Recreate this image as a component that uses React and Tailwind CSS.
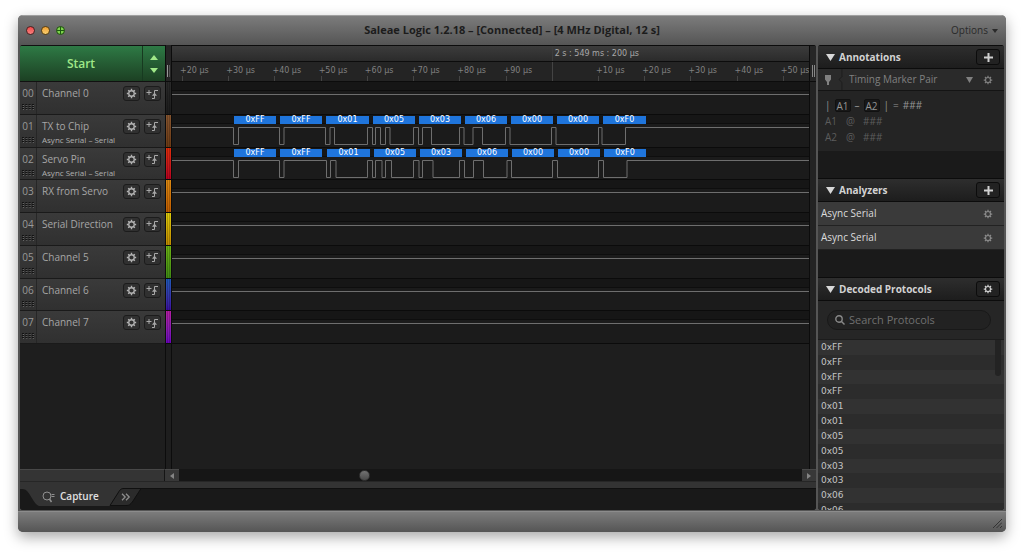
import { useState } from 'react';

const channels = [
  { name: 'Channel 0', strip: 'from-[#2a2a2a] to-[#1c1c1c]' },
  { name: 'TX to Chip', analyzer: 'Async Serial – Serial', strip: 'from-[#86552f] to-[#6b3a14]' },
  { name: 'Servo Pin', analyzer: 'Async Serial – Serial', strip: 'from-[#e02c08] to-[#b80020]' },
  { name: 'RX from Servo', strip: 'from-[#dd8a12] to-[#c05c00]' },
  { name: 'Serial Direction', strip: 'from-[#dccb0c] to-[#c08a00]' },
  { name: 'Channel 5', strip: 'from-[#6cb314] to-[#3f8a14]' },
  { name: 'Channel 6', strip: 'from-[#1c58b8] to-[#3a0ca0]' },
  { name: 'Channel 7', strip: 'from-[#b51ca4] to-[#6c00bc]' },
];

// x of every level change, measured from the left edge of the trace area
const signals = {
  1: {
    edges: [61.5, 66.5, 107.5, 112, 153.5, 158, 162.5, 195.5, 200.5, 203.5, 208.5, 213.5, 218, 241.5, 246.5, 250.5, 259.5, 287.5, 292, 301, 310.5, 333.5, 338, 379.5, 384, 426.5, 430, 453.5],
    bytes: [[62, 42, '0xFF'], [108, 42, '0xFF'], [154, 43, '0x01'], [201, 42, '0x05'], [247, 42, '0x03'], [293, 42, '0x06'], [339, 42, '0x00'], [385, 42, '0x00'], [431, 43, '0xF0']],
  },
  2: {
    edges: [61.5, 66.5, 107.5, 112, 154.5, 158.5, 164, 195.5, 200.5, 203.5, 210, 213.5, 219.5, 241.5, 247, 250.5, 261, 287.5, 292.5, 301.5, 311.5, 335, 339.5, 380.5, 385.5, 426.5, 431.5, 455],
    bytes: [[62, 42, '0xFF'], [108, 42, '0xFF'], [155, 43, '0x01'], [202, 42, '0x05'], [248, 42, '0x03'], [294, 42, '0x06'], [340, 42, '0x00'], [386, 42, '0x00'], [432, 42, '0xF0']],
  },
};

const ticks = ['+20 µs', '+30 µs', '+40 µs', '+50 µs', '+60 µs', '+70 µs', '+80 µs', '+90 µs', '', '+10 µs', '+20 µs', '+30 µs', '+40 µs', '+50 µs'];
const decoded = ['0xFF', '0xFF', '0xFF', '0xFF', '0x01', '0x01', '0x05', '0x05', '0x03', '0x03', '0x06', '0x06'];

const wave = edges => {
  let d = 'M0 12.5';
  edges.forEach((x, i) => { d += ` H${x} V${i % 2 ? 12.5 : 29.5}`; });
  return d + ' H4000';
};

function Gear({ className }) {
  return (
    <svg viewBox="0 0 12 12" className={className} fill="none" stroke="currentColor" aria-hidden="true">
      <circle cx="6" cy="6" r="3" strokeWidth="1.4" />
      <path strokeWidth="1.5" d="M6 .9v1.8M6 9.3v1.8M.9 6h1.8M9.3 6h1.8M2.4 2.4l1.2 1.2M8.4 8.4l1.2 1.2M9.6 2.4L8.4 3.6M3.6 8.4L2.4 9.6" />
    </svg>
  );
}

function Triangle({ className }) {
  return <svg viewBox="0 0 10 8" preserveAspectRatio="none" className={className} fill="currentColor" aria-hidden="true"><path d="M0 0h10L5 8z" /></svg>;
}

function Channel({ index, channel }) {
  return (
    <div className="flex border-b border-[#1a1a1a] bg-linear-to-b from-[#3a3a3a] to-[#303030] overflow-hidden">
      <div className="w-[17px] shrink-0 border-r border-[#262626] pt-1 flex flex-col items-center gap-1">
        <span className="text-[10px] leading-[14px] text-[#999]">{'0' + index}</span>
        <svg viewBox="0 0 12 6" className="w-3 h-[6px]" fill="none" stroke="#131313" aria-hidden="true">
          <path strokeDasharray="2 1.3" d="M0 .5h12M0 2.5h12M0 4.5h12" />
          <path stroke="#666" strokeDasharray="1 2.3" d="M1 1.5h11M1 3.5h11M1 5.500h11" />
        </svg>
      </div>
      <div className="flex-1 min-w-0 pl-[5px] pt-1">
        <div className="text-[10px] leading-[14px] text-[#a6a6a6] whitespace-nowrap">{channel.name}</div>
        {channel.analyzer && <div className="text-[8px] leading-[13px] text-[#b0b0b0] whitespace-nowrap">{channel.analyzer}</div>}
      </div>
      <div className="flex gap-1 pt-1 pr-1">
        <button aria-label="Channel settings" className="w-[17px] h-[15px] rounded-[3px] border border-[#1c1c1c] bg-[#303030] text-[#b4b4b4] flex items-center justify-center"><Gear className="w-[11px] h-[11px]" /></button>
        <button aria-label="Trigger" className="w-[17px] h-[15px] rounded-[3px] border border-[#1c1c1c] bg-[#303030] text-[#a8a8a8] flex items-center justify-center">
          <svg viewBox="0 0 13 10" className="w-[13px] h-[10px]" fill="none" stroke="currentColor" aria-hidden="true">
            <path d="M.5 3.500h5M3 1v5M6 9.500h2.500v-8H12" />
            <path fill="currentColor" stroke="none" d="M6 6.800L8.500 3.500 11 6.800z" />
          </svg>
        </button>
      </div>
    </div>
  );
}

function Trace({ signal }) {
  return (
    <div className="relative overflow-hidden border-b border-[#0b0b0b] bg-[#1b1b1b]">
      <div className="h-[9px] bg-[#161616] border-b border-[#0e0e0e]" />
      <svg className="absolute inset-0 w-full h-full" fill="none" stroke="#6e6e6e" aria-hidden="true">
        <path d={signal ? wave(signal.edges) : 'M0 12.5H4000'} />
      </svg>
      {signal && signal.bytes.map(([x, w, text]) => (
        <span key={x} style={{ left: x, width: w }} className="absolute top-px h-2 bg-[#1f75dc] text-white font-['DejaVu_Sans',sans-serif] text-[8px] leading-[8px] text-center">{text}</span>
      ))}
    </div>
  );
}

function PanelHeader({ title, action, children }) {
  return (
    <div className="h-6 shrink-0 flex items-center pl-2 pr-1 border-y border-t-[#0c0c0c] border-b-[#0c0c0c] bg-linear-to-b from-[#2e2e2e] to-[#1d1d1d]">
      <Triangle className="w-[9px] h-[7px] text-[#d8d8d8]" />
      <h2 className="flex-1 pl-1 text-[10px] font-bold text-[#d2d2d2]">{title}</h2>
      <button aria-label={action} className="w-6 h-4 rounded-[3px] border border-[#0c0c0c] bg-[#222] text-[#d0d0d0] flex items-center justify-center">{children}</button>
    </div>
  );
}

const Plus = () => <svg viewBox="0 0 9 9" className="w-[9px] h-[9px]" stroke="currentColor" strokeWidth="2" aria-hidden="true"><path d="M4.5 0v9M0 4.5h9" /></svg>;

export default function App() {
  const [search, setSearch] = useState('');
  return (
    <div className="h-screen bg-white px-[18px] pt-[15px] pb-[21px] font-['Open_Sans',sans-serif]">
      <div className="h-full flex flex-col rounded-[5px] overflow-hidden bg-[#555] shadow-[0_5px_14px_rgba(0,0,0,0.35)]">
        <header className="h-[30px] shrink-0 grid grid-cols-[1fr_auto_1fr] items-center px-2 border-t border-[#a0a0a0] bg-linear-to-b from-[#7c7c7c] to-[#555]">
          <div className="flex gap-[6px]">
            <button aria-label="Close" className="w-[9px] h-[9px] rounded-full border border-[#4a2020] bg-linear-to-b from-[#f04848] to-[#f88080]" />
            <button aria-label="Minimize" className="w-[9px] h-[9px] rounded-full border border-[#5a4010] bg-linear-to-b from-[#f0a030] to-[#f8d070]" />
            <button aria-label="Zoom" className="w-[9px] h-[9px] rounded-full border border-[#1c4a10] bg-[#7fd44c] flex items-center justify-center">
              <svg viewBox="0 0 7 7" className="w-[7px] h-[7px]" stroke="#1c5a10" aria-hidden="true"><path d="M3.5 0v7M0 3.5h7" /></svg>
            </button>
          </div>
          <h1 className="text-[11px] font-bold text-[#1c1c1c]">Saleae Logic 1.2.18 – [Connected] – [4 MHz Digital, 12 s]</h1>
          <button className="justify-self-end flex items-center gap-1 text-[10px] font-medium text-[#2a2a2a]">Options <Triangle className="w-[6px] h-1" /></button>
        </header>

        <div className="flex-1 min-h-0 flex gap-[2px] px-[2px] pb-px">
          <main className="flex-1 min-w-0 flex flex-col bg-[#1e1e1e] rounded-[3px] overflow-hidden">
            <div className="flex-1 min-h-0 flex">
              <div className="w-[145px] shrink-0">
                <div className="h-[37px] flex border-y border-[#111] text-[#a0e888]">
                  <button className="flex-1 border-r border-[#173a20] bg-linear-to-b from-[#2e7a45] to-[#1c4023] text-[12px] font-semibold">Start</button>
                  <div className="w-[22px] flex flex-col bg-linear-to-b from-[#2e7a45] to-[#1c4023]">
                    <button aria-label="Increase" className="flex-1 flex items-end justify-center pb-1"><Triangle className="w-2 h-[5px] rotate-180" /></button>
                    <button aria-label="Decrease" className="flex-1 flex items-start justify-center pt-1"><Triangle className="w-2 h-[5px]" /></button>
                  </div>
                </div>
                <div className="h-[262px] grid grid-rows-8">
                  {channels.map((c, i) => <Channel key={c.name} index={i} channel={c} />)}
                </div>
              </div>

              <div className="w-[7px] shrink-0 border-x border-[#0c0c0c] bg-[#1e1e1e]">
                <div className="h-[37px] border-b border-[#0c0c0c] bg-[#252525] flex items-end justify-center gap-px pb-1">
                  <i className="w-px h-3 bg-[#999]" /><i className="w-px h-3 bg-[#555]" />
                </div>
                <div className="h-[262px] grid grid-rows-8">
                  {channels.map(c => (
                    <div key={c.name} className={'flex justify-center gap-px border-b border-[#0b0b0b] bg-linear-to-b ' + c.strip}>
                      <i className="w-px bg-black/20" /><i className="w-px bg-black/20" />
                    </div>
                  ))}
                </div>
              </div>

              <div className="flex-1 min-w-0">
                <div className="h-[37px] pl-2 overflow-hidden border-y border-[#0c0c0c] bg-[#242424] font-['DejaVu_Sans',sans-serif] text-[8px]">
                  <div className="-ml-2 pl-2 h-4 border-b border-[#0c0c0c] bg-linear-to-b from-[#3c3c3c] to-[#2b2b2b]">
                    <div className="-mr-[18px] grid grid-cols-14">
                      <span className="col-start-9 ml-[2px] pl-[2px] h-[15px] border-l border-[#3c3c3c] leading-[15px] text-[#a8a8a8] whitespace-nowrap">2 s : 549 ms : 200 µs</span>
                    </div>
                  </div>
                  <div className="-mr-[18px] grid grid-cols-14 h-[19px] leading-[17px] text-[#808080]">
                    {ticks.map((t, i) => (
                      <div key={i} className="flex flex-col whitespace-nowrap">
                        {t && <span className="h-[14px]">{t}</span>}
                        <i className="ml-[2px] flex-1 w-px bg-[#444]" />
                      </div>
                    ))}
                  </div>
                </div>
                <div className="h-[262px] grid grid-rows-8">
                  {channels.map((c, i) => <Trace key={c.name} signal={signals[i]} />)}
                </div>
              </div>

              <div className="w-[7px] shrink-0 border-l border-[#0c0c0c] bg-[#232323]">
                <div className="h-[37px] border-y border-[#0c0c0c] bg-[#262626] flex items-end justify-center gap-px pb-1">
                  <i className="w-px h-3 bg-[#888]" /><i className="w-px h-3 bg-[#888]" />
                </div>
              </div>
            </div>

            <div className="h-3 shrink-0 flex">
              <div className="w-[145px] border-t border-r border-t-[#484848] border-r-[#151515] bg-[#343434]" />
              <button aria-label="Scroll left" className="w-[14px] border-t border-[#484848] bg-[#383838] text-[#858585] flex items-center justify-center"><Triangle className="w-[6px] h-1 rotate-90" /></button>
              <div className="flex-1 bg-[#161616] pl-[180px] flex items-center">
                <button aria-label="Scroll position" className="w-[11px] h-[11px] rounded-full border border-[#333] bg-linear-to-b from-[#727272] to-[#4a4a4a]" />
              </div>
              <button aria-label="Scroll right" className="w-[14px] border-t border-[#484848] bg-[#383838] text-[#858585] flex items-center justify-center"><Triangle className="w-[6px] h-1 -rotate-90" /></button>
            </div>

            <div className="h-[7px] shrink-0 border-t border-[#262626] bg-[#333]" />
            <nav className="relative h-[22px] shrink-0 bg-[#191919] border-t border-[#101010]">
              <svg viewBox="0 0 130 22" className="absolute left-0 -top-px w-[130px] h-[22px]" aria-hidden="true">
                <path fill="#333" d="M0 0H105C101 1 99 5 97 8L90 18H19C14 16 11 7 7 3C5 1 3 1 0 1Z" />
                <path fill="#2b2b2b" stroke="#101010" d="M90 17.500L98 5C100 1.500 101 .5 104 .5H121L113 13C110 17 109 17.500 106 17.500Z" />
              </svg>
              <div className="relative flex items-center h-[15px] pl-[22px]">
                <button className="flex items-center gap-1 w-[79px] text-[10px] font-semibold text-[#e0e0e0]">
                  <svg viewBox="0 0 14 12" className="w-[14px] h-3" fill="none" stroke="#909090" aria-hidden="true">
                    <circle cx="5" cy="5" r="4" /><path d="M7.500 8l2 3" strokeWidth="1.5" /><path d="M9.500 3.500h3M9.500 5.500h3" />
                  </svg>
                  Capture
                </button>
                <button aria-label="More tabs" className="text-[#8c8c8c]">
                  <svg viewBox="0 0 10 8" className="w-[10px] h-2" fill="none" stroke="currentColor" strokeWidth="1.3" aria-hidden="true"><path d="M1 .8l3.200 3.200L1 7.200M5 .8l3.200 3.200L5 7.200" /></svg>
                </button>
              </div>
            </nav>
          </main>

          <aside className="w-[186px] shrink-0 flex flex-col bg-[#1a1a1a] rounded-[3px] overflow-hidden">
            <section className="h-[133px] shrink-0">
              <PanelHeader title="Annotations" action="Add annotation"><Plus /></PanelHeader>
              <div className="h-[22px] flex items-center pl-[7px] pr-[11px] gap-[6px] border-b border-[#141414] bg-[#2a2a2a] text-[#808080]">
                <svg viewBox="0 0 6 10" className="w-[6px] h-[10px]" fill="currentColor" aria-hidden="true"><path d="M0 0h6v4.500L4 7v3H2V7L0 4.500z" /></svg>
                <svg viewBox="0 0 6 22" className="w-[6px] h-[21px]" fill="none" stroke="#1c1c1c" aria-hidden="true"><path d="M5 0v8l-3 3 3 3v8" /></svg>
                <label className="relative flex-1 flex items-center">
                  <select aria-label="Marker pair" className="w-full appearance-none text-[10px] outline-none">
                    <option>Timing Marker Pair</option>
                  </select>
                  <Triangle className="absolute right-[4px] w-[7px] h-[6px] pointer-events-none" />
                </label>
                <button aria-label="Marker settings"><Gear className="w-[10px] h-[10px]" /></button>
              </div>
              <div className="h-[60px] bg-[#242424] pl-[7px] pt-[6px] text-[10px] leading-4 text-[#5c5c5c]">
                <div className="flex items-center gap-1 text-[#949494]">
                  <span>|</span>
                  <span className="px-px h-[13px] leading-[12px] rounded-[2px] bg-[#181818] border border-[#111]">A1</span>
                  <span>–</span>
                  <span className="px-px h-[13px] leading-[12px] rounded-[2px] bg-[#181818] border border-[#111]">A2</span>
                  <span>|</span><span>=</span><span>###</span>
                </div>
                <div className="flex"><span className="w-[21px]">A1</span><span className="w-[17px]">@</span>###</div>
                <div className="flex"><span className="w-[21px]">A2</span><span className="w-[17px]">@</span>###</div>
              </div>
            </section>

            <section className="h-[99px] shrink-0">
              <PanelHeader title="Analyzers" action="Add analyzer"><Plus /></PanelHeader>
              {[0, 1].map(i => (
                <div key={i} className="h-6 flex items-center justify-between pl-[3px] pr-[11px] border-b border-[#222] bg-[#3a3a3a] text-[10px] text-[#dcdcdc]">
                  Async Serial
                  <button aria-label="Analyzer settings" className="text-[#8a8a8a]"><Gear className="w-[10px] h-[10px]" /></button>
                </div>
              ))}
            </section>

            <section className="flex-1 min-h-0 flex flex-col">
              <PanelHeader title="Decoded Protocols" action="Protocol settings"><Gear className="w-[10px] h-[10px]" /></PanelHeader>
              <div className="shrink-0 h-[38px] pl-[9px] pr-[13px] pt-[9px] bg-[#262626]">
                <label className="h-[20px] flex items-center gap-1 rounded-full border border-[#191919] bg-[#222] pl-[7px]">
                  <svg viewBox="0 0 10 10" className="w-[10px] h-[10px] shrink-0" fill="none" stroke="#888" strokeWidth="1.4" aria-hidden="true"><circle cx="4" cy="4" r="3.200" /><path d="M6.500 6.500l3 3" /></svg>
                  <input aria-label="Search Protocols" value={search} onChange={e => setSearch(e.target.value)} placeholder="Search Protocols" className="w-full min-w-0 text-[11px] text-[#ccc] placeholder:text-[#707070] outline-none" />
                </label>
              </div>
              <div className="relative flex-1 min-h-0 overflow-hidden border-t border-[#1c1c1c]">
                <ul className="h-[178px] grid grid-rows-12 font-['DejaVu_Sans',sans-serif] text-[9px] leading-[15px] text-[#c4c4c4]">
                  {decoded.map((d, i) => <li key={i} className="pl-[3px] odd:bg-[#323232] even:bg-[#2c2c2c]">{d}</li>)}
                </ul>
                <i className="absolute right-[3px] top-0 w-[6px] h-9 rounded-b-full bg-[#232323]" />
              </div>
            </section>
          </aside>
        </div>

        <footer className="h-[21px] shrink-0 border-t border-[#8c8c8c] bg-linear-to-b from-[#7c7c7c] to-[#555] flex items-end justify-end p-1">
          <svg viewBox="0 0 9 9" className="w-[9px] h-[9px]" stroke="#333" aria-hidden="true"><path d="M0 9L9 0M3.500 9L9 3.500M7 9l2-2" /></svg>
        </footer>
      </div>
    </div>
  );
}
